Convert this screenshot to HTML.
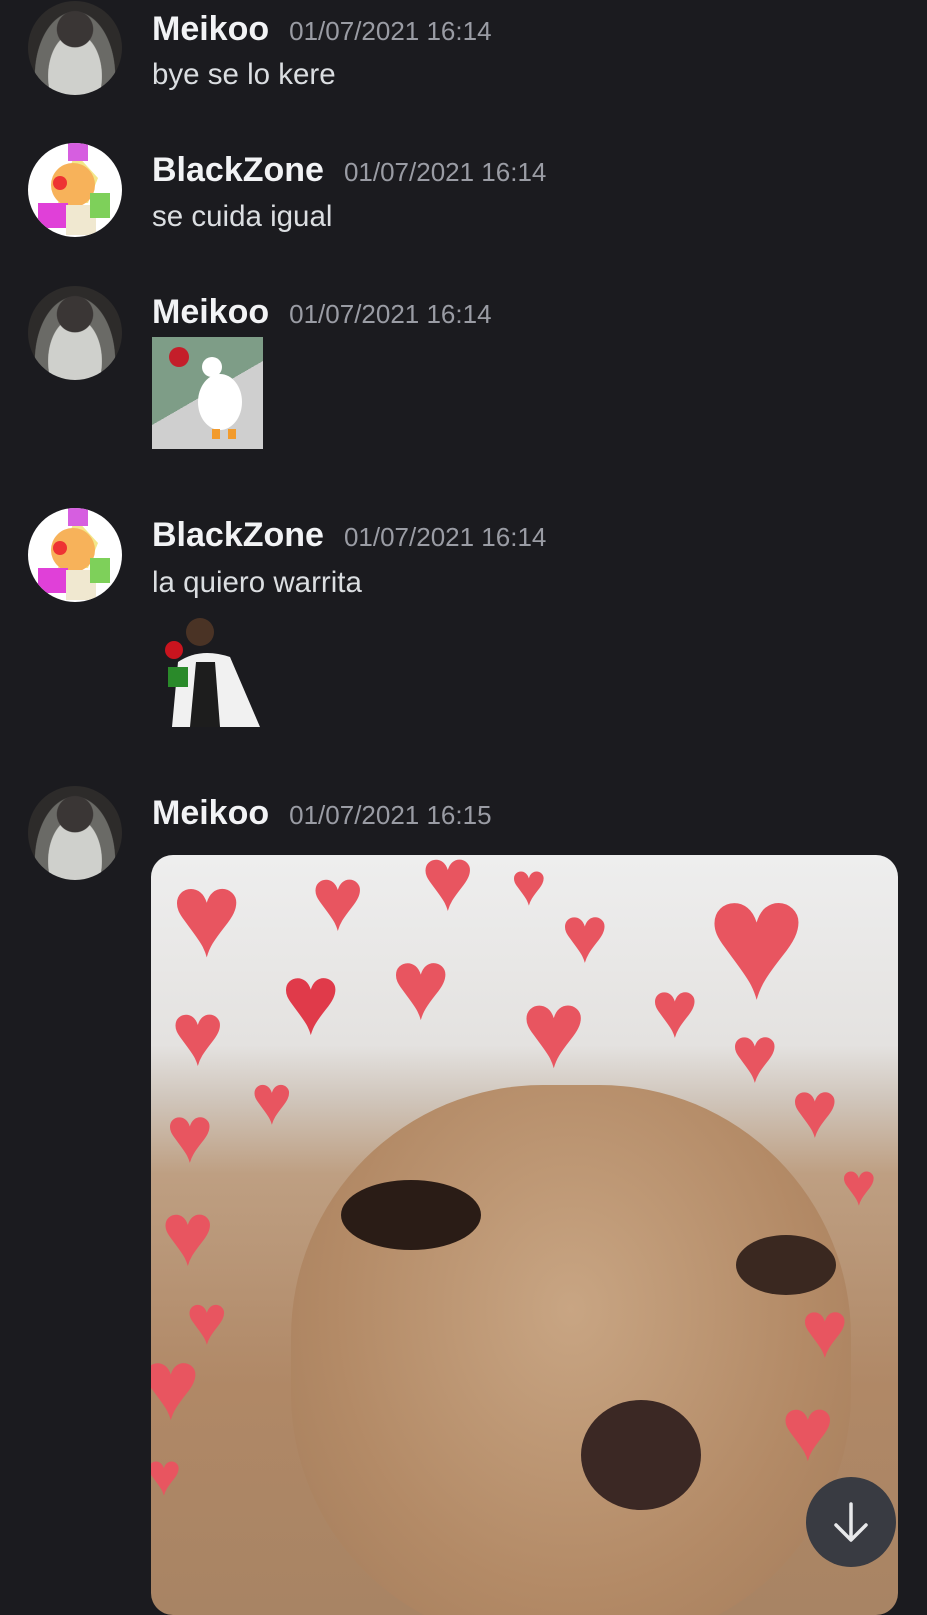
<!DOCTYPE html>
<html><head><meta charset="utf-8"><style>
html,body{margin:0;padding:0;background:#1b1b1f;width:927px;height:1600px;overflow:hidden;font-family:"Liberation Sans",sans-serif}
.av{position:absolute;left:28px;width:94px;height:94px;border-radius:50%;overflow:hidden}
.mei{background:radial-gradient(circle at 50% 30%,#3a3635 0 22%,transparent 23%),radial-gradient(ellipse at 50% 80%,#cfd0cc 0 40%,#6a6a66 41% 60%,#2d2b2a 61%)}
.bz{background:#fff}
.name{position:absolute;left:152px;color:#f2f3f5;font-weight:bold;font-size:34px;line-height:36px}
.ts{color:#9a9ca4;font-weight:normal;font-size:26px;margin-left:20px}
.msg{position:absolute;left:152px;color:#dbdee1;font-size:29.5px;line-height:34px}
.h{position:absolute;color:#e85560;font-size:60px;line-height:1}
</style></head><body>

<div class="av mei" style="top:1px"></div>
<div class="name" style="top:11px">Meikoo<span class="ts">01/07/2021 16:14</span></div>
<div class="msg" style="top:58px">bye se lo kere</div>

<div class="av bz" style="top:143px"><svg width="94" height="94"><polygon points="47,10 70,35 60,60 30,60" fill="#f3e78a"/><circle cx="45" cy="42" r="22" fill="#f7b25a"/><rect x="40" y="0" width="20" height="18" fill="#d65ee0"/><circle cx="32" cy="40" r="7" fill="#e33"/><rect x="10" y="60" width="30" height="25" fill="#e040d8"/><rect x="38" y="62" width="30" height="30" fill="#f0e8d0"/><rect x="62" y="50" width="20" height="25" fill="#7ed05a"/></svg></div>
<div class="name" style="top:152px">BlackZone<span class="ts">01/07/2021 16:14</span></div>
<div class="msg" style="top:200px">se cuida igual</div>

<div class="av mei" style="top:286px"></div>
<div class="name" style="top:294px">Meikoo<span class="ts">01/07/2021 16:14</span></div>
<div style="position:absolute;left:152px;top:337px;width:111px;height:112px;background:linear-gradient(150deg,#7e9d87 0 50%,#cfcfcf 50%)"><svg width="111" height="112"><ellipse cx="68" cy="65" rx="22" ry="28" fill="#fff"/><circle cx="60" cy="30" r="10" fill="#fff"/><circle cx="27" cy="20" r="10" fill="#c41e2a"/><rect x="60" y="92" width="8" height="10" fill="#f29b2d"/><rect x="76" y="92" width="8" height="10" fill="#f29b2d"/></svg></div>

<div class="av bz" style="top:508px"><svg width="94" height="94"><polygon points="47,10 70,35 60,60 30,60" fill="#f3e78a"/><circle cx="45" cy="42" r="22" fill="#f7b25a"/><rect x="40" y="0" width="20" height="18" fill="#d65ee0"/><circle cx="32" cy="40" r="7" fill="#e33"/><rect x="10" y="60" width="30" height="25" fill="#e040d8"/><rect x="38" y="62" width="30" height="30" fill="#f0e8d0"/><rect x="62" y="50" width="20" height="25" fill="#7ed05a"/></svg></div>
<div class="name" style="top:517px">BlackZone<span class="ts">01/07/2021 16:14</span></div>
<div class="msg" style="top:566px">la quiero warrita</div>
<div style="position:absolute;left:160px;top:612px;width:104px;height:115px"><svg width="104" height="115"><circle cx="40" cy="20" r="14" fill="#4a3325"/><path d="M12 115 L18 50 Q40 35 70 45 L100 115Z" fill="#f1f1f1"/><path d="M30 115 L36 50 L55 50 L60 115Z" fill="#1d1d1d"/><circle cx="14" cy="38" r="9" fill="#c9141e"/><rect x="8" y="55" width="20" height="20" fill="#2a8a2a"/></svg></div>

<div class="av mei" style="top:786px"></div>
<div class="name" style="top:795px">Meikoo<span class="ts">01/07/2021 16:15</span></div>

<div style="position:absolute;left:151px;top:855px;width:747px;height:760px;border-radius:22px;overflow:hidden;background:linear-gradient(180deg,#eeeeee 0,#e4e2e0 25%,#d0c6bc 32%,#be9f82 42%,#b08866 70%,#a88464 100%)">
<div style="position:absolute;left:140px;top:230px;width:560px;height:560px;border-radius:45%;background:radial-gradient(ellipse at 50% 40%,#c8a583 0,#b38a66 60%,#a27b5a 100%)"></div>
<div style="position:absolute;left:190px;top:325px;width:140px;height:70px;border-radius:50%;background:#2a1c16"></div>
<div style="position:absolute;left:585px;top:380px;width:100px;height:60px;border-radius:50%;background:#3a2820"></div>
<div style="position:absolute;left:430px;top:545px;width:120px;height:110px;border-radius:50%;background:#3b2824"></div>
<div class="h" style="left:20px;top:0px;font-size:120px">♥</div>
<div class="h" style="left:160px;top:0px;font-size:90px">♥</div>
<div class="h" style="left:270px;top:-20px;font-size:90px">♥</div>
<div class="h" style="left:360px;top:0px;font-size:60px">♥</div>
<div class="h" style="left:410px;top:40px;font-size:80px">♥</div>
<div class="h" style="left:555px;top:0px;font-size:170px">♥</div>
<div class="h" style="left:130px;top:95px;font-size:100px;color:#e03a4a">♥</div>
<div class="h" style="left:240px;top:80px;font-size:100px">♥</div>
<div class="h" style="left:370px;top:120px;font-size:110px">♥</div>
<div class="h" style="left:20px;top:135px;font-size:90px">♥</div>
<div class="h" style="left:100px;top:210px;font-size:70px">♥</div>
<div class="h" style="left:500px;top:115px;font-size:80px">♥</div>
<div class="h" style="left:580px;top:160px;font-size:80px">♥</div>
<div class="h" style="left:640px;top:215px;font-size:80px">♥</div>
<div class="h" style="left:15px;top:240px;font-size:80px">♥</div>
<div class="h" style="left:10px;top:335px;font-size:90px">♥</div>
<div class="h" style="left:35px;top:430px;font-size:70px">♥</div>
<div class="h" style="left:-10px;top:480px;font-size:100px">♥</div>
<div class="h" style="left:-5px;top:590px;font-size:60px">♥</div>
<div class="h" style="left:650px;top:435px;font-size:80px">♥</div>
<div class="h" style="left:630px;top:530px;font-size:90px">♥</div>
<div class="h" style="left:690px;top:300px;font-size:60px">♥</div>
</div>

<div style="position:absolute;left:806px;top:1477px;width:90px;height:90px;border-radius:50%;background:#393b42"><svg width="90" height="90"><path d="M45 27 V62 M30 48 L45 63 L60 48" stroke="#e8e9eb" stroke-width="3.5" fill="none" stroke-linecap="round" stroke-linejoin="round"/></svg></div>
</body></html>
